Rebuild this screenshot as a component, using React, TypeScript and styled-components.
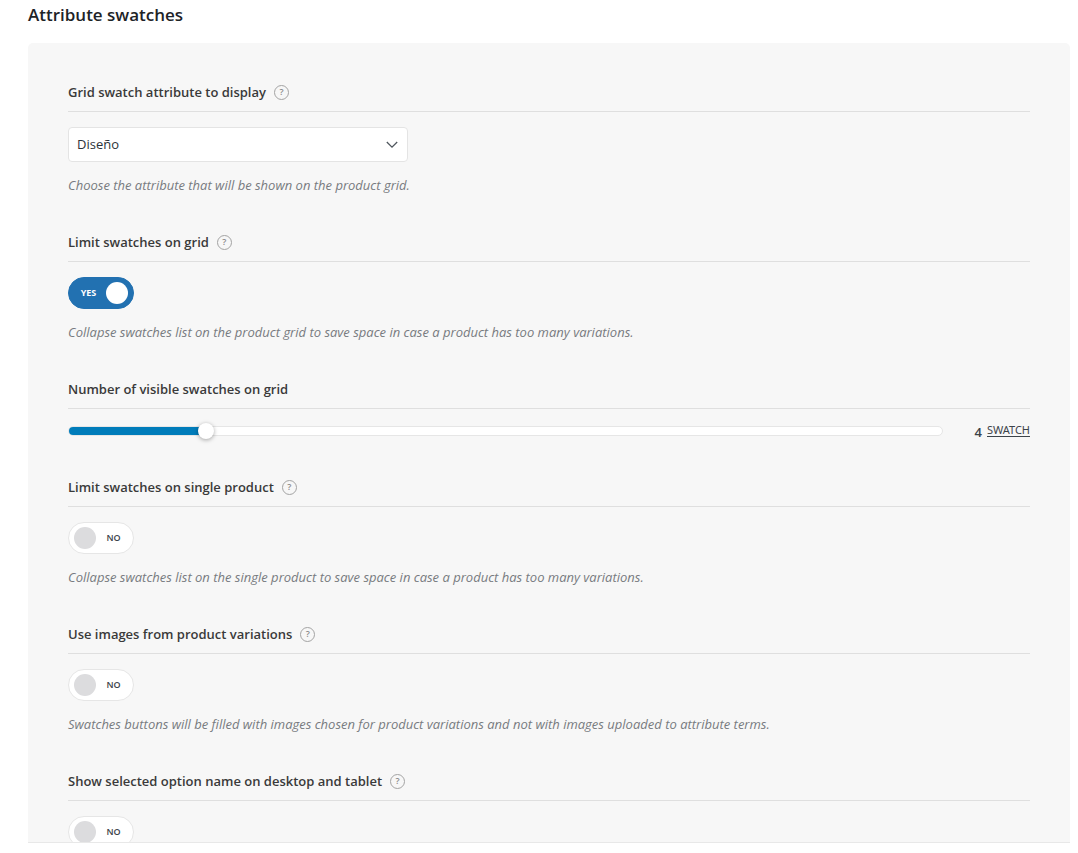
import React, { useId, useState } from "react";
import styled, { createGlobalStyle } from "styled-components";

const GlobalStyle = createGlobalStyle`
  *, *::before, *::after { box-sizing: border-box; }
  body {
    margin: 0;
    background: #fff;
    color: #3c434a;
    font-family: "Segoe UI", "Open Sans", "Noto Sans", sans-serif;
    font-size: 13px;
    line-height: 20px;
  }
  button, input, select { font: inherit; color: inherit; margin: 0; }
`;

const Page = styled.main`
  display: flex;
  flex-direction: column;
  height: 100vh;
  padding: 0 8px 10px 28px;
`;

const PageTitle = styled.h2`
  margin: 0;
  padding: 3px 0 16px;
  color: #1d2327;
  font-size: 17px;
  line-height: 24px;
  font-weight: 600;
`;

const Panel = styled.form`
  flex: 1;
  min-height: 0;
  overflow: hidden;
  display: flex;
  flex-direction: column;
  gap: 37px;
  padding: 39px 40px 0;
  border-bottom: 1px solid #e8e8e8;
  border-radius: 5px 5px 0 0;
  background: #f7f7f7;
`;

const FieldBox = styled.section`
  flex: none;
`;

const FieldHeader = styled.div`
  display: flex;
  align-items: center;
  gap: 8px;
  height: 30px;
  margin-bottom: 15px;
  padding-bottom: 9px;
  border-bottom: 1px solid #dfdfdf;
`;

const FieldLabel = styled.label`
  color: #3a3a3a;
  font-weight: 600;
`;

const HelpButton = styled.button`
  display: flex;
  align-items: center;
  justify-content: center;
  width: 15px;
  height: 15px;
  padding: 0;
  border: 1px solid #a3a3a3;
  border-radius: 50%;
  background: none;
  color: #8a8a8a;
  font-size: 9px;
  font-weight: 600;
  line-height: 12px;
`;

const Description = styled.p`
  margin: 13px 0 0;
  color: #777b80;
  font-style: italic;
`;

const SelectBox = styled.div`
  position: relative;
  max-width: 340px;
  height: 35px;
`;

const Select = styled.select`
  appearance: none;
  width: 100%;
  height: 100%;
  padding: 0 32px 2px 8px;
  border: 1px solid #e4e4e4;
  border-radius: 4px;
  background: #fff;
  color: #2c3338;
`;

const Chevron = styled.svg`
  position: absolute;
  right: 10px;
  top: 14px;
  pointer-events: none;
`;

const ToggleTrack = styled.label<{ $on: boolean }>`
  position: relative;
  display: flex;
  flex-direction: ${(p) => (p.$on ? "row-reverse" : "row")};
  align-items: center;
  gap: 3px;
  width: 66px;
  height: 32px;
  padding: 0 5px;
  border: 1px solid ${(p) => (p.$on ? "#2271b1" : "#e6e6e6")};
  border-radius: 16px;
  background: ${(p) => (p.$on ? "#2271b1" : "#fff")};
  color: ${(p) => (p.$on ? "#fff" : "#3c434a")};
  font-size: 9px;
  font-weight: ${(p) => (p.$on ? 700 : 600)};
  cursor: pointer;
`;

const ToggleInput = styled.input`
  position: absolute;
  inset: 0;
  width: 100%;
  height: 100%;
  opacity: 0;
`;

const Knob = styled.span<{ $on: boolean }>`
  width: 22px;
  height: 22px;
  border-radius: 50%;
  background: ${(p) => (p.$on ? "#fff" : "#dcdcde")};
`;

const ToggleText = styled.span`
  flex: 1;
  text-align: center;
`;

const SliderRow = styled.div`
  display: flex;
  align-items: center;
  height: 16px;
  padding-bottom: 2px;
`;

const SliderTrack = styled.div`
  position: relative;
  flex: 1;
  height: 10px;
  border: 1px solid #e6e6e6;
  border-radius: 5px;
  background: #fff;
`;

const SliderFill = styled.div`
  height: 8px;
  border-radius: 4px 0 0 4px;
  background: #007cba;
`;

const SliderInput = styled.input`
  position: absolute;
  left: -9px;
  top: -4px;
  width: calc(100% + 18px);
  height: 16px;
  appearance: none;
  background: transparent;
  &::-webkit-slider-thumb {
    appearance: none;
    width: 16px;
    height: 16px;
    border-radius: 50%;
    background: #fff;
    box-shadow: 0 1px 4px rgba(0, 0, 0, 0.35);
  }
`;

const Readout = styled.div`
  display: flex;
  align-items: center;
  justify-content: flex-end;
  gap: 5px;
  width: 87px;
`;

const Amount = styled.output`
  padding-top: 2px;
  font-weight: 600;
`;

const Unit = styled.a`
  margin-bottom: 1px;
  border-bottom: 1px solid #3c434a;
  color: #3c434a;
  font-family: "Segoe UI", "Noto Sans", sans-serif;
  font-size: 11px;
  line-height: 12px;
  text-decoration: none;
`;

type FieldProps = {
  label: string;
  id: string;
  help?: boolean;
  description?: string;
  children: React.ReactNode;
};

function Field({ label, id, help, description, children }: FieldProps) {
  return (
    <FieldBox>
      <FieldHeader>
        <FieldLabel htmlFor={id}>{label}</FieldLabel>
        {help && <HelpButton type="button">?</HelpButton>}
      </FieldHeader>
      {children}
      {description && <Description>{description}</Description>}
    </FieldBox>
  );
}

type ToggleFieldProps = { label: string; description?: string; initial?: boolean };

function ToggleField({ label, description, initial = false }: ToggleFieldProps) {
  const id = useId();
  const [on, setOn] = useState(initial);
  return (
    <Field label={label} id={id} help description={description}>
      <ToggleTrack $on={on}>
        <ToggleInput id={id} type="checkbox" checked={on} onChange={(e) => setOn(e.target.checked)} />
        <Knob $on={on} />
        <ToggleText>{on ? "YES" : "NO"}</ToggleText>
      </ToggleTrack>
    </Field>
  );
}

const MIN = 1;
const MAX = 20;

function SliderField({ label }: { label: string }) {
  const id = useId();
  const [value, setValue] = useState(4);
  return (
    <Field label={label} id={id}>
      <SliderRow>
        <SliderTrack>
          <SliderFill style={{ width: `${((value - MIN) / (MAX - MIN)) * 100}%` }} />
          <SliderInput
            id={id}
            type="range"
            min={MIN}
            max={MAX}
            value={value}
            onChange={(e) => setValue(Number(e.target.value))}
          />
        </SliderTrack>
        <Readout>
          <Amount htmlFor={id}>{value}</Amount>
          <Unit href="#swatch">SWATCH</Unit>
        </Readout>
      </SliderRow>
    </Field>
  );
}

export default function App() {
  const selectId = useId();
  return (
    <>
      <GlobalStyle />
      <Page>
        <PageTitle>Attribute swatches</PageTitle>
        <Panel>
          <Field
            label="Grid swatch attribute to display"
            id={selectId}
            help
            description="Choose the attribute that will be shown on the product grid."
          >
            <SelectBox>
              <Select id={selectId}>
                <option>Diseño</option>
              </Select>
              <Chevron width="12" height="8" viewBox="0 0 12 8" fill="none" stroke="#50575e" strokeWidth="1.3">
                <path d="M0.8 1L6 6.2L11.2 1" />
              </Chevron>
            </SelectBox>
          </Field>
          <ToggleField
            label="Limit swatches on grid"
            initial
            description="Collapse swatches list on the product grid to save space in case a product has too many variations."
          />
          <SliderField label="Number of visible swatches on grid" />
          <ToggleField
            label="Limit swatches on single product"
            description="Collapse swatches list on the single product to save space in case a product has too many variations."
          />
          <ToggleField
            label="Use images from product variations"
            description="Swatches buttons will be filled with images chosen for product variations and not with images uploaded to attribute terms."
          />
          <ToggleField label="Show selected option name on desktop and tablet" />
        </Panel>
      </Page>
    </>
  );
}
